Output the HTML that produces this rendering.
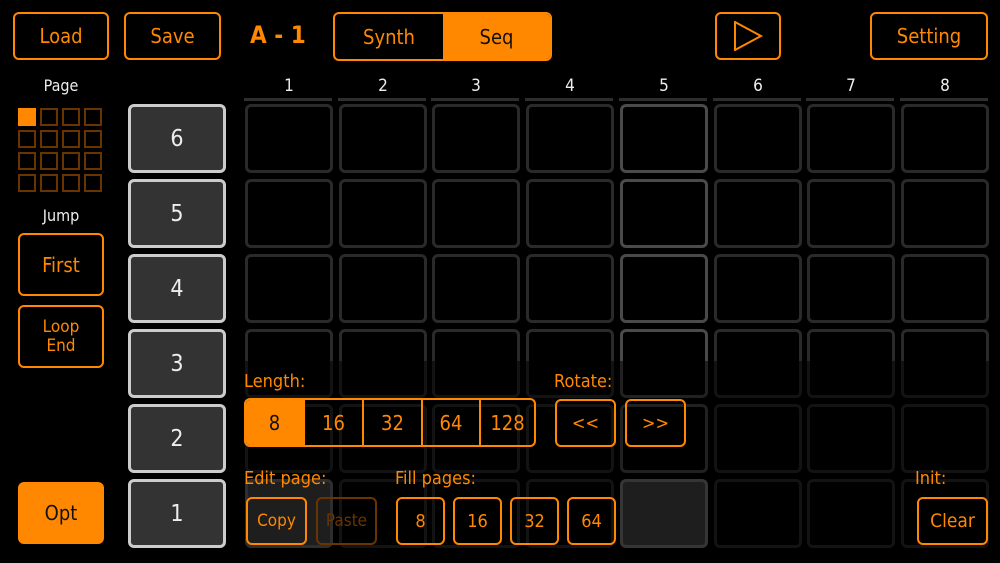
<!DOCTYPE html>
<html><head><meta charset="utf-8"><style>
*{box-sizing:border-box;margin:0;padding:0}
body{width:1000px;height:563px;background:#000;position:relative;overflow:hidden;font-family:"DejaVu Sans Condensed","DejaVu Sans","Liberation Sans",sans-serif;}
.a{position:absolute}
.b{position:absolute;border:2px solid #ff8800;border-radius:6px;color:#ff8800;display:flex;align-items:center;justify-content:center;font-size:20px;}
.w{position:absolute;color:#eee;font-size:16px;text-align:center}
.r{position:absolute;left:128px;width:98px;height:69px;background:#333;border:3px solid #ccc;border-radius:6px;color:#eee;font-size:23px;display:flex;align-items:center;justify-content:center}
.c{position:absolute;width:88px;height:69px;border:3px solid #2a2a2a;border-radius:6px}
.c5{border-color:#4a4a4a}
.p{position:absolute;width:18px;height:18px;border:2px solid #6a3400}
.h{position:absolute;top:98px;height:3px;width:88px;background:#2e2e2e}
.l{position:absolute;color:#ff8800;font-size:18px}
.s{display:flex;align-items:center;justify-content:center;height:100%}
</style></head><body>
<div class="b" style="left:13px;top:12px;width:96px;height:48px">Load</div>
<div class="b" style="left:124px;top:12px;width:97px;height:48px">Save</div>
<div class="a" style="left:250px;top:21px;color:#ff8800;font-size:24px;font-weight:bold">A - 1</div>
<div class="b" style="left:333px;top:12px;width:219px;height:49px;padding:0;overflow:hidden;justify-content:flex-start">
<div class="s" style="width:108px">Synth</div>
<div class="s" style="flex:1;background:#ff8800;color:#111">Seq</div></div>
<div class="b" style="left:715px;top:12px;width:66px;height:48px"><svg width="30" height="30" viewBox="0 0 30 30"><path d="M2 1 L28 15 L2 29 Z" fill="none" stroke="#ff8800" stroke-width="2"/></svg></div>
<div class="b" style="left:870px;top:12px;width:118px;height:48px">Setting</div>

<div class="w" style="left:20px;top:76px;width:82px">Page</div>
<div class="p" style="left:18px;top:108px;background:#ff8800;border-color:#ff8800"></div>
<div class="p" style="left:40px;top:108px"></div><div class="p" style="left:62px;top:108px"></div><div class="p" style="left:84px;top:108px"></div>
<div class="p" style="left:18px;top:130px"></div><div class="p" style="left:40px;top:130px"></div><div class="p" style="left:62px;top:130px"></div><div class="p" style="left:84px;top:130px"></div>
<div class="p" style="left:18px;top:152px"></div><div class="p" style="left:40px;top:152px"></div><div class="p" style="left:62px;top:152px"></div><div class="p" style="left:84px;top:152px"></div>
<div class="p" style="left:18px;top:174px"></div><div class="p" style="left:40px;top:174px"></div><div class="p" style="left:62px;top:174px"></div><div class="p" style="left:84px;top:174px"></div>
<div class="w" style="left:20px;top:206px;width:82px">Jump</div>
<div class="b" style="left:18px;top:233px;width:86px;height:63px">First</div>
<div class="b" style="left:18px;top:305px;width:86px;height:63px;font-size:17px;line-height:19px;text-align:center">Loop<br>End</div>
<div class="b" style="left:18px;top:482px;width:86px;height:62px;background:#ff8800;color:#111">Opt</div>

<div class="r" style="top:104px">6</div>
<div class="r" style="top:179px">5</div>
<div class="r" style="top:254px">4</div>
<div class="r" style="top:329px">3</div>
<div class="r" style="top:404px">2</div>
<div class="r" style="top:479px">1</div>

<div class="w" style="left:245px;top:76px;width:88px;font-size:17px">1</div>
<div class="w" style="left:339px;top:76px;width:88px;font-size:17px">2</div>
<div class="w" style="left:432px;top:76px;width:88px;font-size:17px">3</div>
<div class="w" style="left:526px;top:76px;width:88px;font-size:17px">4</div>
<div class="w" style="left:620px;top:76px;width:88px;font-size:17px">5</div>
<div class="w" style="left:714px;top:76px;width:88px;font-size:17px">6</div>
<div class="w" style="left:807px;top:76px;width:88px;font-size:17px">7</div>
<div class="w" style="left:901px;top:76px;width:88px;font-size:17px">8</div>
<div class="h" style="left:244px"></div><div class="h" style="left:338px"></div><div class="h" style="left:431px"></div><div class="h" style="left:525px"></div><div class="h" style="left:619px"></div><div class="h" style="left:713px"></div><div class="h" style="left:806px"></div><div class="h" style="left:900px"></div>

<div class="c" style="left:245px;top:104px"></div><div class="c" style="left:339px;top:104px"></div><div class="c" style="left:432px;top:104px"></div><div class="c" style="left:526px;top:104px"></div><div class="c c5" style="left:620px;top:104px"></div><div class="c" style="left:714px;top:104px"></div><div class="c" style="left:807px;top:104px"></div><div class="c" style="left:901px;top:104px"></div>
<div class="c" style="left:245px;top:179px"></div><div class="c" style="left:339px;top:179px"></div><div class="c" style="left:432px;top:179px"></div><div class="c" style="left:526px;top:179px"></div><div class="c c5" style="left:620px;top:179px"></div><div class="c" style="left:714px;top:179px"></div><div class="c" style="left:807px;top:179px"></div><div class="c" style="left:901px;top:179px"></div>
<div class="c" style="left:245px;top:254px"></div><div class="c" style="left:339px;top:254px"></div><div class="c" style="left:432px;top:254px"></div><div class="c" style="left:526px;top:254px"></div><div class="c c5" style="left:620px;top:254px"></div><div class="c" style="left:714px;top:254px"></div><div class="c" style="left:807px;top:254px"></div><div class="c" style="left:901px;top:254px"></div>
<div class="c" style="left:245px;top:329px"></div><div class="c" style="left:339px;top:329px"></div><div class="c" style="left:432px;top:329px"></div><div class="c" style="left:526px;top:329px"></div><div class="c c5" style="left:620px;top:329px"></div><div class="c" style="left:714px;top:329px"></div><div class="c" style="left:807px;top:329px"></div><div class="c" style="left:901px;top:329px"></div>
<div class="c" style="left:245px;top:404px"></div><div class="c" style="left:339px;top:404px"></div><div class="c" style="left:432px;top:404px"></div><div class="c" style="left:526px;top:404px"></div><div class="c c5" style="left:620px;top:404px"></div><div class="c" style="left:714px;top:404px"></div><div class="c" style="left:807px;top:404px"></div><div class="c" style="left:901px;top:404px"></div>
<div class="c" style="left:245px;top:479px;background:#444;border-color:#666"></div><div class="c" style="left:339px;top:479px"></div><div class="c" style="left:432px;top:479px"></div><div class="c" style="left:526px;top:479px"></div><div class="c c5" style="left:620px;top:479px;background:#444;border-color:#777"></div><div class="c" style="left:714px;top:479px"></div><div class="c" style="left:807px;top:479px"></div><div class="c" style="left:901px;top:479px"></div>

<div class="a" style="left:238px;top:361px;width:762px;height:202px;background:rgba(0,0,0,0.55)"></div>

<div class="l" style="left:244px;top:371px">Length:</div>
<div class="b" style="left:244px;top:398px;width:292px;height:49px;padding:0;overflow:hidden;justify-content:flex-start">
<div class="s" style="width:57px;background:#ff8800;color:#111">8</div>
<div class="s" style="width:59px;border-left:2px solid #ff8800">16</div>
<div class="s" style="width:59px;border-left:2px solid #ff8800">32</div>
<div class="s" style="width:58px;border-left:2px solid #ff8800">64</div>
<div class="s" style="flex:1;border-left:2px solid #ff8800">128</div></div>
<div class="l" style="left:554px;top:371px">Rotate:</div>
<div class="b" style="left:555px;top:399px;width:61px;height:48px;font-size:18px">&lt;&lt;</div>
<div class="b" style="left:625px;top:399px;width:61px;height:48px;font-size:18px">&gt;&gt;</div>

<div class="l" style="left:244px;top:468px">Edit page:</div>
<div class="b" style="left:246px;top:497px;width:61px;height:48px;font-size:17px">Copy</div>
<div class="b" style="left:316px;top:497px;width:61px;height:48px;font-size:17px;border-color:#6a3400;color:#6a3400">Paste</div>
<div class="l" style="left:395px;top:468px">Fill pages:</div>
<div class="b" style="left:396px;top:497px;width:49px;height:48px;font-size:18px">8</div>
<div class="b" style="left:453px;top:497px;width:49px;height:48px;font-size:18px">16</div>
<div class="b" style="left:510px;top:497px;width:49px;height:48px;font-size:18px">32</div>
<div class="b" style="left:567px;top:497px;width:49px;height:48px;font-size:18px">64</div>
<div class="l" style="left:915px;top:468px">Init:</div>
<div class="b" style="left:917px;top:497px;width:71px;height:48px;font-size:19px">Clear</div>
</body></html>
